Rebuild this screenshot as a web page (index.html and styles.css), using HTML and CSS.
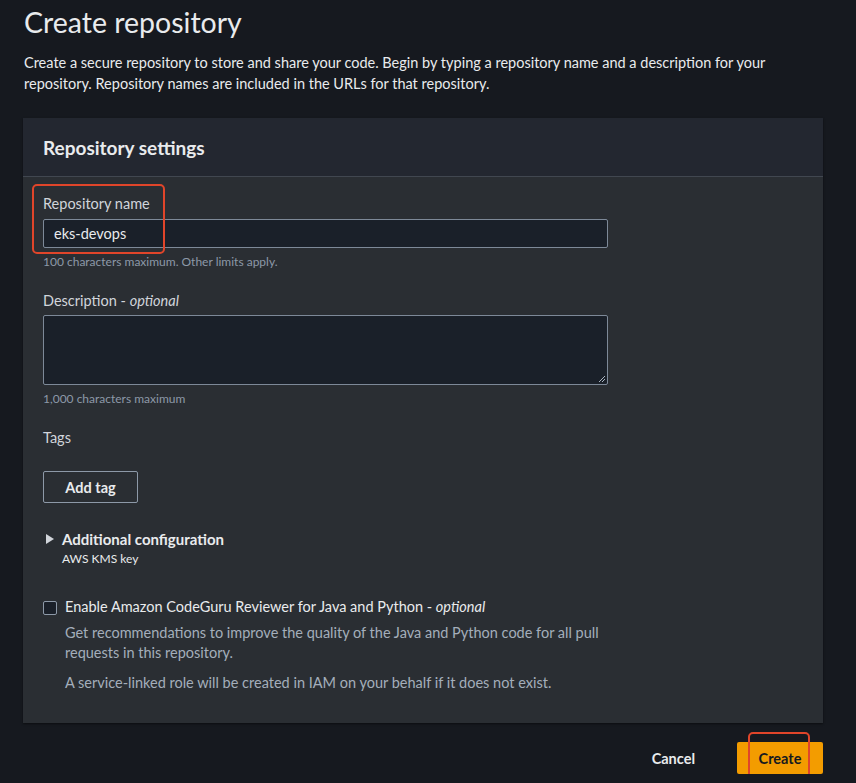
FILE: index.html
```html
<!DOCTYPE html>
<html lang="en">
<head>
<meta charset="utf-8">
<title>Create repository</title>
<link rel="stylesheet" href="styles.css">
</head>
<body>
<main class="page">
  <h1 class="title">Create repository</h1>
  <p class="intro">Create a secure repository to store and share your code. Begin by typing a repository name and a description for your repository. Repository names are included in the URLs for that repository.</p>

  <section class="card">
    <header class="card-head">
      <h2>Repository settings</h2>
    </header>
    <div class="card-body">
      <div class="field field-name">
        <label class="label">Repository name</label>
        <div class="input">eks-devops</div>
        <span class="highlight highlight-name"></span>
        <div class="hint">100 characters maximum. Other limits apply.</div>
      </div>

      <div class="field field-desc">
        <label class="label">Description - <em>optional</em></label>
        <div class="textarea">
          <svg class="grip" width="8" height="8" viewBox="0 0 8 8"><path d="M7 1L1 7M7 4L4 7" stroke="#aab4c0" stroke-width="1"/></svg>
        </div>
        <div class="hint">1,000 characters maximum</div>
      </div>

      <div class="field tags">
        <div class="label">Tags</div>
        <button class="btn-normal">Add tag</button>
      </div>

      <div class="expander">
        <svg class="caret" width="10" height="12" viewBox="0 0 10 12"><path d="M1 1L9 6L1 11Z" fill="#d1d5db"/></svg>
        <div>
          <div class="exp-title">Additional configuration</div>
          <div class="exp-sub">AWS KMS key</div>
        </div>
      </div>

      <div class="check-row">
        <span class="checkbox"></span>
        <div class="check-text">
          <div class="check-label">Enable Amazon CodeGuru Reviewer for Java and Python - <em>optional</em></div>
          <p class="check-desc">Get recommendations to improve the quality of the Java and Python code for all pull requests in this repository.</p>
          <p class="check-desc">A service-linked role will be created in IAM on your behalf if it does not exist.</p>
        </div>
      </div>
    </div>
  </section>

  <div class="actions">
    <button class="btn-link">Cancel</button>
    <button class="btn-primary">Create<span class="highlight highlight-create"></span></button>
  </div>
</main>
</body>
</html>
```

FILE: styles.css
```css
* { box-sizing: border-box; }
html, body { margin: 0; padding: 0; }
body {
  background: #16191f;
  color: #d1d5db;
  font-family: Lato, "Open Sans", "Noto Sans", sans-serif;
  font-size: 14.5px;
}
.page {
  padding: 4px 33px 0 23px;
}
.title {
  margin: 0 0 0 1px;
  font-size: 28.5px;
  line-height: 36px;
  font-weight: 400;
  color: #e9ebed;
}
.intro {
  margin: 12px 0 0 1px;
  line-height: 21px;
  color: #e9ebed;
  max-width: 780px;
}
.card {
  margin-top: 24px;
  background: #2a2e33;
  box-shadow: 0 1px 2px rgba(0,0,0,0.5);
}
.card-head {
  background: #232730;
  border-bottom: 1px solid #414750;
  padding: 19px 20px 17px;
}
.card-head h2 {
  margin: 0;
  font-size: 19px;
  line-height: 22px;
  font-weight: 700;
  color: #e9ebed;
}
.card-body {
  padding: 17px 20px 30px;
}
.field { position: relative; margin-bottom: 21px; }
.label {
  display: block;
  line-height: 20px;
  color: #d1d5db;
  margin-bottom: 5px;
}
.field-desc .label { margin-bottom: 4px; }
.label em { font-style: italic; }
.input {
  width: 565px;
  height: 29px;
  background: #1a2029;
  border: 1px solid #7d8998;
  border-radius: 2px;
  padding: 4px 10px;
  line-height: 19px;
  color: #e9ebed;
}
.textarea {
  position: relative;
  width: 565px;
  height: 70px;
  background: #1a2029;
  border: 1px solid #7d8998;
  border-radius: 2px;
}
.grip { position: absolute; right: 1px; bottom: 1px; }
.hint {
  margin-top: 6px;
  font-size: 12px;
  line-height: 16px;
  color: #8d99a8;
}
.highlight {
  position: absolute;
  border: 2px solid #e0452a;
  border-radius: 5px;
  pointer-events: none;
}
.highlight-name { left: -11px; top: -10px; width: 133px; height: 70px; }
.tags .label { margin-bottom: 23px; }
.btn-normal {
  font-family: inherit;
  font-size: 14.5px;
  font-weight: 700;
  color: #e9ebed;
  background: transparent;
  border: 1px solid #8d99a8;
  border-radius: 2px;
  width: 95px;
  height: 32px;
  padding: 0;
}
.expander {
  display: flex;
  gap: 7px;
  margin-top: 26px;
  margin-left: 2px;
}
.caret { margin-top: 4px; }
.exp-title { font-size: 15px; font-weight: 700; color: #e9ebed; line-height: 20px; }
.exp-sub { font-size: 12px; line-height: 16px; color: #e9ebed; margin-top: 2px; }
.check-row { display: flex; gap: 8px; margin-top: 30px; }
.checkbox {
  flex: none;
  width: 14px;
  height: 14px;
  margin-top: 4px;
  border: 1px solid #8d99a8;
  border-radius: 2px;
  background: #1a2029;
}
.check-text { max-width: 548px; }
.check-label { line-height: 20px; color: #e9ebed; white-space: nowrap; }
.check-desc {
  margin: 6px 0 0;
  line-height: 20px;
  color: #a4aebb;
}
.check-desc + .check-desc { margin-top: 10px; }
.actions {
  display: flex;
  justify-content: flex-end;
  align-items: center;
  gap: 42px;
  margin-top: 19px;
}
.btn-link {
  font-family: inherit;
  font-size: 14.5px;
  font-weight: 700;
  color: #e9ebed;
  background: none;
  border: 0;
  padding: 0;
}
.btn-primary {
  position: relative;
  font-family: inherit;
  font-size: 14.5px;
  font-weight: 700;
  color: #16191f;
  background: #f39c00;
  border: 0;
  border-radius: 2px;
  width: 86px;
  height: 32px;
  padding: 0;
}
.highlight-create { left: 11px; top: -10px; width: 62px; height: 47px; }
```
